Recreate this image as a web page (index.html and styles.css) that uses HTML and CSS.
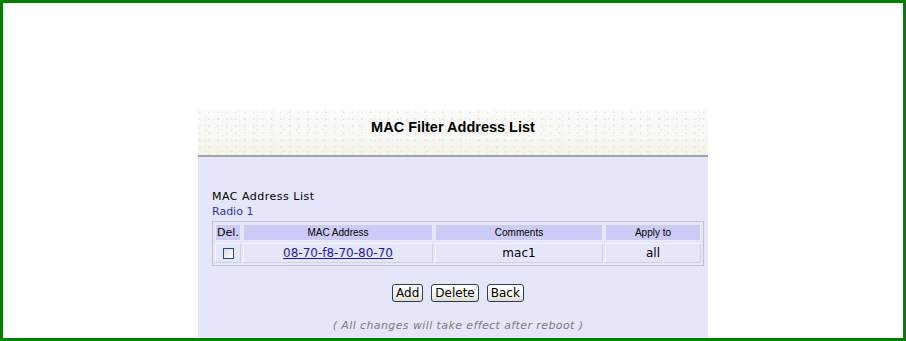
FILE: index.html
```html
<!DOCTYPE html>
<html lang="en">
<head>
  <meta charset="UTF-8" />
  <title>MAC Filter Address List</title>
  <link rel="stylesheet" href="styles.css">
</head>
<body>

<div class="frame">
  <div class="panel">

    <!-- title band -->
    <div class="banner">
      <h1>MAC Filter Address List</h1>
    </div>

    <div class="content">
      <p class="list-title">MAC Address List</p>
      <p class="radio">Radio 1</p>

      <table class="maclist">
        <tr>
          <th class="col-del">Del.</th>
          <th class="col-mac">MAC Address</th>
          <th class="col-com">Comments</th>
          <th class="col-app">Apply to</th>
        </tr>
        <tr>
          <td><span class="check"></span></td>
          <td><a href="#">08-70-f8-70-80-70</a></td>
          <td>mac1</td>
          <td>all</td>
        </tr>
      </table>

      <div class="buttons">
        <button>Add</button>
        <button>Delete</button>
        <button>Back</button>
      </div>

      <p class="note">( All changes will take effect after reboot )</p>
    </div>

  </div>
</div>

</body>
</html>
```

FILE: styles.css
```css
* {
    margin: 0;
    padding: 0;
    box-sizing: border-box;
}

body {
    background: #fff;
    font-family: "DejaVu Sans", Verdana, sans-serif;
    font-size: 11px;
    color: #000;
}

.frame {
    height: 341px;
    border: 3px solid #008000;
    overflow: hidden;
}

.panel {
    width: 510px;
    margin: 107px auto 0;
}

.banner {
    height: 47px;
    background-color: #f8f8f6;
    background-image:
        radial-gradient(circle at 20% 30%, #e4e4de 0.5px, transparent 1px),
        radial-gradient(circle at 60% 80%, #e8e8e2 0.5px, transparent 1px),
        radial-gradient(circle at 45% 15%, #ececE6 0.5px, transparent 1px),
        linear-gradient(to bottom, #fbfbfa 0%, #f7f7f4 60%, #f3f3e8 100%);
    background-size: 9px 7px, 13px 11px, 17px 5px, 100% 100%;
    border-bottom: 2px solid #a4a4a4;
    display: flex;
    align-items: center;
    justify-content: center;
    padding-bottom: 11px;
}

.banner h1 {
    font-family: "Liberation Sans", Arial, sans-serif;
    font-size: 14.5px;
    font-weight: bold;
}

.content {
    background: #e6e6fa;
    padding: 32px 4px 40px 14px;
}

.list-title,
.radio {
    line-height: 15px;
}

.list-title {
    letter-spacing: 0.5px;
}

.radio {
    color: #333399;
}

.maclist {
    margin-top: 2px;
    width: 492px;
    table-layout: fixed;
    border: 1px solid #c4c4d0;
    border-spacing: 2px;
    text-align: center;
}

.maclist th {
    background: #cbcbf5;
    font-family: "Liberation Sans", Arial, sans-serif;
    font-weight: normal;
    font-size: 10px;
    height: 17px;
    border: 1px solid #e8e8f8;
}

.maclist th.col-del {
    font-family: "DejaVu Sans", Verdana, sans-serif;
    font-size: 11px;
}

.col-del { width: 26px; }
.col-mac { width: 190px; }
.col-com { width: 168px; }

.maclist td {
    height: 20px;
    font-size: 12px;
    border: 1px solid #f4f4fc;
    border-right-color: #d2d2e2;
    border-bottom-color: #d2d2e2;
}

.maclist a {
    color: #1a1aa6;
}

.check {
    display: inline-block;
    width: 11px;
    height: 11px;
    border: 1px solid #1c5180;
    background: linear-gradient(135deg, #dcdcd6, #fff);
    vertical-align: middle;
}

.buttons {
    display: flex;
    justify-content: center;
    gap: 8px;
    margin-top: 18px;
}

.buttons button {
    font-family: "DejaVu Sans", Verdana, sans-serif;
    font-size: 12px;
    height: 18px;
    padding: 0 3px;
    border: 1px solid #2c3c54;
    border-radius: 3px;
    background: linear-gradient(to bottom, #fff, #f4f4ee 60%, #dcdcd0);
    color: #000;
}

.note {
    margin-top: 17px;
    text-align: center;
    font-style: italic;
    font-size: 11px;
    letter-spacing: 0.4px;
    color: #7c7c7c;
}
```
